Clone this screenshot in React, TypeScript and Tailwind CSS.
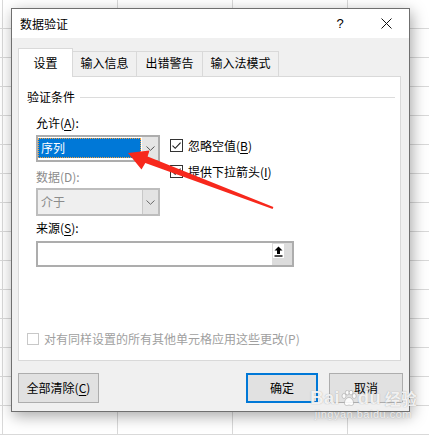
import React from 'react'

const Check = ({ checked, disabled }: { checked?: boolean; disabled?: boolean }) => (
  <span
    className={`flex shrink-0 items-center justify-center border bg-white ${
      disabled ? 'h-[12px] w-[12px] border-[#c8c8c8]' : 'h-[13px] w-[13px] border-[#333333]'
    }`}
  >
    {checked && (
      <svg width="11" height="11" viewBox="0 0 11 11">
        <path d="M1.5 5.6 L4.2 8.3 L9.6 2.6" fill="none" stroke="#1a1a1a" strokeWidth="1.1" />
      </svg>
    )}
  </span>
)

const Chevron = ({ color = '#555555' }: { color?: string }) => (
  <svg width="9" height="5" viewBox="0 0 9 5">
    <path d="M0.5 0.5 L4.5 4.3 L8.5 0.5" fill="none" stroke={color} strokeWidth="1" />
  </svg>
)

const Paw = () => (
  <svg width="16" height="17" viewBox="0 0 16 17" className="mx-[1px]">
    <g fill="rgba(255,255,255,0.85)" stroke="rgba(150,150,150,0.6)" strokeWidth="0.8">
      <ellipse cx="3" cy="6" rx="2" ry="2.5" />
      <ellipse cx="6.3" cy="2.6" rx="1.9" ry="2.3" />
      <ellipse cx="10" cy="2.6" rx="1.9" ry="2.3" />
      <ellipse cx="13.2" cy="6" rx="2" ry="2.5" />
      <path d="M8 7.5 C5 7.5 3 11.5 3.5 14 C4 16 6.5 15.5 8 15 C9.5 15.5 12 16 12.5 14 C13 11.5 11 7.5 8 7.5 Z" />
    </g>
  </svg>
)

const App = () => {
  return (
    <div className="relative h-[435px] w-[429px] overflow-hidden bg-white font-['Noto_Sans_CJK_SC','Noto_Sans',sans-serif] text-[12px] leading-[16px] text-black [background-image:linear-gradient(to_right,#d9d9d9_1px,transparent_1px),linear-gradient(to_bottom,#d9d9d9_1px,transparent_1px)] [background-size:115px_29px] [background-position:2px_28px]">
      {/* dialog */}
      <div className="ml-[11px] mt-[8px] flex h-[404px] w-[399px] flex-col border border-[#6f6f6f] bg-[#f0f0f0] shadow-[2px_4px_14px_rgba(0,0,0,0.35)]">
        {/* title bar */}
        <div className="flex h-[29px] items-center bg-white pl-[8px]">
          <span className="flex-1">数据验证</span>
          <span className="flex h-full w-[46px] items-center justify-center text-[13px] font-['Liberation_Sans',sans-serif]">?</span>
          <span className="flex h-full w-[46px] items-center justify-center">
            <svg width="11" height="11" viewBox="0 0 11 11">
              <path d="M0.5 0.5 L10.5 10.5 M10.5 0.5 L0.5 10.5" stroke="#111111" strokeWidth="1" />
            </svg>
          </span>
        </div>

        {/* body */}
        <div className="flex flex-1 flex-col pl-[6px] pt-[10px]">
          {/* tabs */}
          <div className="flex h-[29px] items-end">
            <div className="relative z-10 flex h-[29px] w-[55px] items-center justify-center border border-b-0 border-[#d9d9d9] bg-white pb-[1px]">
              设置
            </div>
            <div className="flex h-[26px] w-[64px] items-center justify-center border border-l-0 border-[#d9d9d9] bg-[#f0f0f0] pb-[2px]">
              输入信息
            </div>
            <div className="flex h-[26px] w-[66px] items-center justify-center border border-l-0 border-[#d9d9d9] bg-[#f0f0f0] pb-[2px]">
              出错警告
            </div>
            <div className="flex h-[26px] w-[76px] items-center justify-center border border-l-0 border-[#d9d9d9] bg-[#f0f0f0] pb-[2px]">
              输入法模式
            </div>
          </div>

          {/* panel */}
          <div className="-mt-px flex h-[285px] w-[383px] flex-col border border-[#d9d9d9] bg-white pt-[12px]">
            <div className="flex items-center pl-[8px] pr-[5px]">
              <span>验证条件</span>
              <span className="ml-[5px] h-px flex-1 bg-[#dcdcdc]" />
            </div>

            <div className="flex flex-col pl-[17px] pt-[10px]">
              <div className="flex">
                <div className="flex w-[124px] flex-col">
                  <span>
                    允许(<span className="underline underline-offset-2">A</span>):
                  </span>
                  <div className="mt-[4px] flex h-[27px] border-2 border-[#adadad] bg-white">
                    <div className="flex-1 pb-[2px] pr-[1px] pt-[1px]">
                      <div className="flex h-full items-center bg-[#0078d7] pl-[3px] text-white outline-1 -outline-offset-1 outline-dotted outline-[#f0a040]">
                        序列
                      </div>
                    </div>
                    <div className="flex w-[16px] items-center justify-center bg-[#e5e5e5]">
                      <Chevron />
                    </div>
                  </div>
                  <span className="mt-[7px] text-[#8c8c8c]">数据(D):</span>
                  <div className="mt-[3px] flex h-[28px] border-2 border-[#bdbdbd] bg-[#efefef]">
                    <div className="flex flex-1 items-center pl-[3px] text-[#8c8c8c]">介于</div>
                    <div className="flex w-[16px] items-center justify-center border-l border-[#c8c8c8] bg-[#e3e3e3]">
                      <Chevron color="#6a6a6a" />
                    </div>
                  </div>
                </div>

                <div className="ml-[10px] flex flex-col pt-[24px]">
                  <div className="flex h-[13px] items-center gap-[5px]">
                    <Check checked />
                    <span>
                      忽略空值(<span className="underline underline-offset-2">B</span>)
                    </span>
                  </div>
                  <div className="mt-[13px] flex h-[13px] items-center gap-[5px]">
                    <Check checked />
                    <span>
                      提供下拉箭头(<span className="underline underline-offset-2">I</span>)
                    </span>
                  </div>
                </div>
              </div>

              <span className="mt-[4px]">
                来源(<span className="underline underline-offset-2">S</span>):
              </span>
              <div className="mt-[5px] flex h-[26px] w-[258px] justify-end border-2 border-[#adadad] bg-white">
                <div className="flex w-[20px] items-start justify-start bg-[#dcdcdc] pl-[1px] pt-[1px]">
                  <div className="flex h-[14px] w-[11px] items-center justify-center bg-white">
                    <svg width="9" height="11" viewBox="0 0 9 11">
                      <path d="M4.5 0.5 L0.5 4.5 H3 V8 H6 V4.5 H8.5 Z" fill="#000000" />
                      <rect x="0.5" y="9.3" width="8" height="1.4" fill="#000000" />
                    </svg>
                  </div>
                </div>
              </div>
            </div>

            <div className="mt-[66px] flex h-[12px] items-center gap-[5px] pl-[8px]">
              <Check disabled />
              <span className="text-[#a0a0a0]">对有同样设置的所有其他单元格应用这些更改(P)</span>
            </div>
          </div>

          {/* buttons */}
          <div className="mt-[12px] flex">
            <div className="flex h-[30px] w-[81px] items-center justify-center border border-[#adadad] bg-[#e1e1e1]">
              全部清除(<span className="underline underline-offset-2">C</span>)
            </div>
            <div className="ml-[147px] flex h-[30px] w-[72px] items-center justify-center border-2 border-[#0078d7] bg-[#e1e1e1]">
              确定
            </div>
            <div className="ml-[11px] flex h-[30px] w-[74px] items-center justify-center border border-[#adadad] bg-[#e1e1e1]">
              取消
            </div>
          </div>
        </div>
      </div>

      {/* red annotation arrow */}
      <svg className="pointer-events-none absolute left-0 top-0" width="429" height="435" viewBox="0 0 429 435">
        <polygon
          points="128,153 149.5,150.5 147.6,156.6 273.4,207.1 272.6,208.9 145.3,163 141.5,169.5"
          fill="#f7281c"
        />
      </svg>

      {/* watermark */}
      <div className="pointer-events-none absolute left-[310px] top-[388px] flex flex-col items-center text-white/85 [text-shadow:0_0_1px_rgba(120,120,120,0.7)]">
        <div className="flex items-center font-['Liberation_Sans',sans-serif] text-[19px] font-bold leading-[20px]">
          <span>Bai</span>
          <Paw />
          <span>du</span>
          <span className="ml-[4px] font-['Noto_Sans_CJK_SC',sans-serif] text-[16px] font-bold">经验</span>
        </div>
        <div className="font-['Liberation_Sans',sans-serif] text-[11px] leading-[13px] tracking-[0.5px]">jingyan.baidu.com</div>
      </div>
    </div>
  )
}

export default App
